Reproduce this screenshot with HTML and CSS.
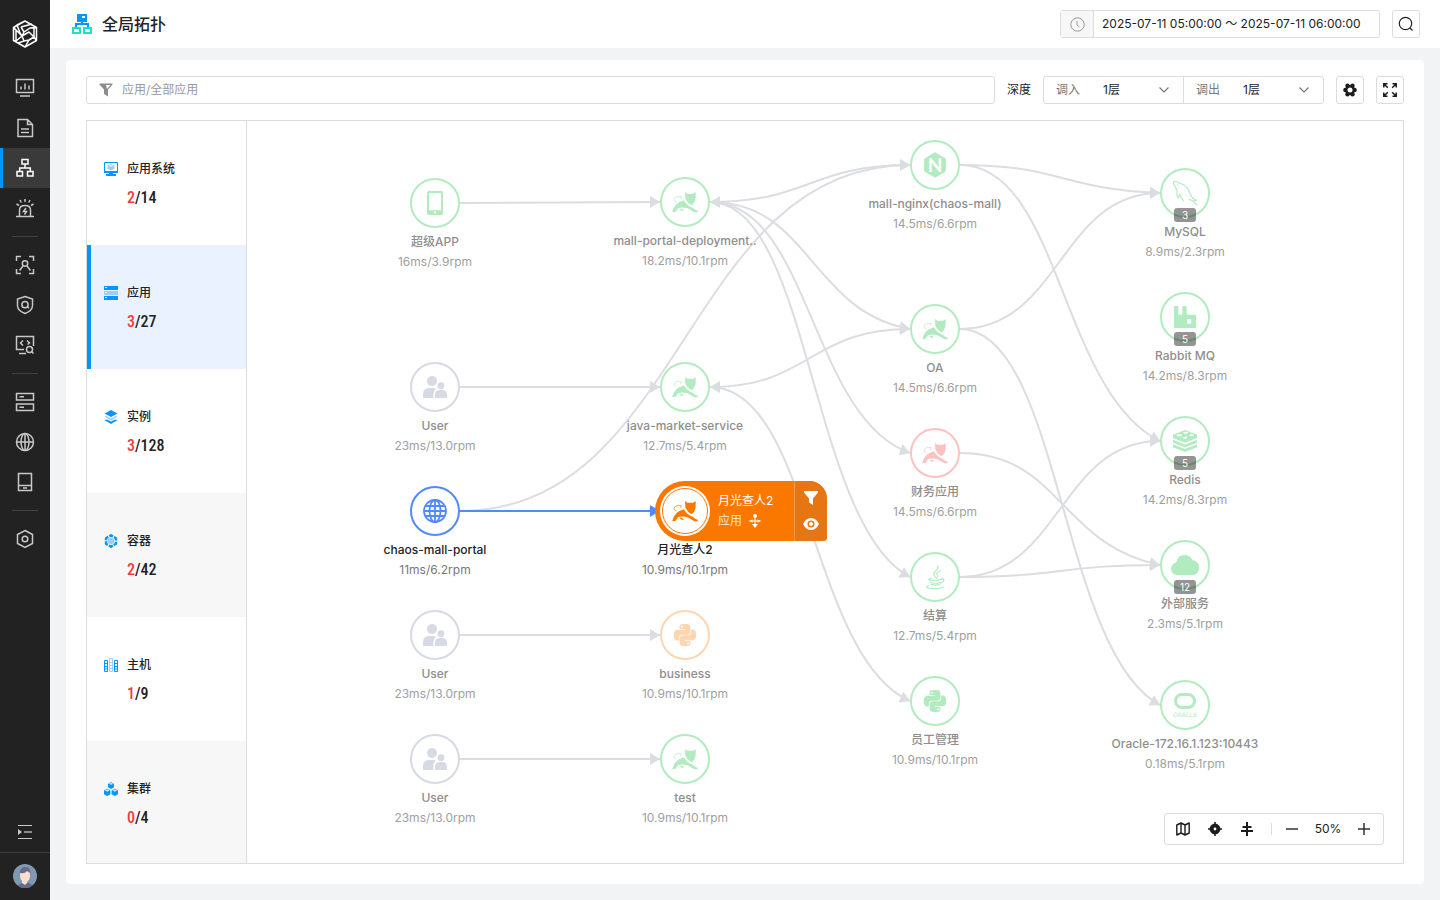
FILE: index.html
```html
<!DOCTYPE html>
<html lang="zh-CN">
<head>
<meta charset="utf-8">
<meta name="viewport" content="width=device-width, initial-scale=1">
<title>全局拓扑</title>
<link rel="stylesheet" href="styles.css">
</head>
<body>
<svg class="sprite" aria-hidden="true">
  <defs>
    <marker id="arrow" class="arrow" viewBox="0 0 10 12" refX="10" refY="6" markerWidth="10" markerHeight="12" markerUnits="userSpaceOnUse" orient="auto-start-reverse"><path d="M0 0 10 6 0 12Z"/></marker>
    <marker id="arrow-active" class="arrow-active" viewBox="0 0 10 12" refX="10" refY="6" markerWidth="10" markerHeight="12" markerUnits="userSpaceOnUse" orient="auto"><path d="M0 0 10 6 0 12Z"/></marker>
  </defs>
  <symbol id="tomcat" viewBox="-39 -39 78 78">
    <path fill="currentColor" d="M0-30 7-25H25L32-30V-13Q30 3 20 10 7 4 1-11ZM-38 29-36 24Q-32 10-18 1L-3-5Q4 9 16 14L24 18Q30 24 38 26V31H28L8 19Q-8 14-20 18L-29 30H-38ZM-17 20H-9L-3 27Q-12 28-17 20Z"/>
    <path fill="none" stroke="currentColor" stroke-width="2" d="M-25 0Q-38-5-29-14-20-19-11-16L-13-9"/>
  </symbol>
  <symbol id="users" viewBox="-39 -39 78 78">
    <g fill="currentColor"><circle cx="-9" cy="-18" r="15"/><circle cx="18" cy="-4" r="10"/><path d="M-36 33V22Q-36 3-17 3H-1L2 6Q-5 12-5 22V33ZM0 33V24Q0 9 15 9H21Q36 9 36 24V33Z"/></g>
  </symbol>
  <symbol id="phone" viewBox="-39 -39 78 78">
    <path fill="currentColor" fill-rule="evenodd" d="M-19-36H19Q24-36 24-31V31Q24 36 19 36H-19Q-24 36-24 31V-31Q-24-36-19-36ZM-18-30V22H18V-30ZM-3 26V31H3V26Z"/>
  </symbol>
  <symbol id="globe" viewBox="0 0 26 26">
    <g fill="none" stroke="currentColor" stroke-width="1.8"><circle cx="13" cy="13" r="11"/><ellipse cx="13" cy="13" rx="5.5" ry="11"/><path d="M13 2V24M2 13H24M3.5 8H22.5M3.5 18H22.5"/></g>
  </symbol>
  <symbol id="python" viewBox="-2 -2 28 28">
    <path fill="currentColor" d="M14.25.18l.9.2.73.26.59.3.45.32.34.34.25.34.16.33.1.3.04.26.02.2-.01.13V8.5l-.05.63-.13.55-.21.46-.26.38-.3.31-.33.25-.35.19-.35.14-.33.1-.3.07-.26.04-.21.02H8.77l-.69.05-.59.14-.5.22-.41.27-.33.32-.27.35-.2.36-.15.37-.1.35-.07.32-.04.27-.02.21v3.06H3.17l-.21-.03-.28-.07-.32-.12-.35-.18-.36-.26-.36-.36-.35-.46-.32-.59-.28-.73-.21-.88-.14-1.05-.05-1.23.06-1.22.16-1.04.24-.87.32-.71.36-.57.4-.44.42-.33.42-.24.4-.16.36-.1.32-.05.24-.01h.16l.06.01h8.16v-.83H6.18l-.01-2.75-.02-.37.05-.34.11-.31.17-.28.25-.26.31-.23.38-.2.44-.18.51-.15.58-.12.64-.1.71-.06.77-.04.84-.02 1.27.05zm-6.3 1.98l-.23.33-.08.41.08.41.23.34.33.22.41.09.41-.09.33-.22.23-.34.08-.41-.08-.41-.23-.33-.33-.22-.41-.09-.41.09zm13.09 3.95l.28.06.32.12.35.18.36.27.36.35.35.47.32.59.28.73.21.88.14 1.04.05 1.23-.06 1.23-.16 1.04-.24.86-.32.71-.36.57-.4.45-.42.33-.42.24-.4.16-.36.09-.32.05-.24.02-.16-.01h-8.22v.82h5.84l.01 2.76.02.36-.05.34-.11.31-.17.29-.25.25-.31.24-.38.2-.44.17-.51.15-.58.13-.64.09-.71.07-.77.04-.84.01-1.27-.04-1.07-.14-.9-.2-.73-.25-.59-.3-.45-.33-.34-.34-.25-.34-.16-.33-.1-.3-.04-.25-.02-.2.01-.13v-5.34l.05-.64.13-.54.21-.46.26-.38.3-.32.33-.24.35-.2.35-.14.33-.1.3-.06.26-.04.21-.02.13-.01h5.84l.69-.05.59-.14.5-.21.41-.28.33-.32.27-.35.2-.36.15-.36.1-.35.07-.32.04-.28.02-.21V6.07h2.09l.14.01zm-6.47 14.25l-.23.33-.08.41.08.41.23.33.33.23.41.08.41-.08.33-.23.23-.33.08-.41-.08-.41-.23-.33-.33-.23-.41-.08-.41.08z"/>
  </symbol>
  <symbol id="java" viewBox="-39 -39 78 78">
    <g fill="none" stroke="currentColor" stroke-width="3.4" stroke-linecap="round"><path d="M8-34Q12-25 2-18-9-9 1 1M17-19Q0-12 7-6 11-1 4 4M-12 4Q-26 8-12 10 6 12 20 7M20 5Q30 5 25 13 22 17 16 19M-15 16Q0 21 15 17M-12 22Q0 26 13 23M-20 26Q-34 32-8 35 16 35 25 30"/></g>
  </symbol>
  <symbol id="mysql" viewBox="-39 -39 78 78">
    <path fill="none" stroke="currentColor" stroke-width="3.4" stroke-linejoin="round" d="M-4 24-11 13-16 4-20 15Q-27 8-23-4L-29-18Q-38-29-33-34-27-37-19-30-2-28 10-10 17 5 23 16L34 22 24 24 37 37M23 24Q17 19 12 20M-24-24H-21"/>
  </symbol>
  <symbol id="rabbit" viewBox="-39 -39 78 78">
    <path fill="currentColor" fill-rule="evenodd" d="M-31-33H-22L-20-31V-9L-18-7H-10L-8-9V-31L-6-33H3L5-31V-9L7-7H31L33-5V31L31 33H-31L-33 31V-31ZM8 6 6 8V18L8 20H17L19 18V8L17 6Z"/>
  </symbol>
  <symbol id="redis" viewBox="-39 -39 78 78">
    <path fill="currentColor" d="M0-33 36-19V-9L0 5-36-9V-19ZM-36-4 0 11 36-4V5L0 19-36 5ZM-36 10 0 24 36 10V19L0 33-36 19Z"/>
    <g fill="#fff"><path d="M-3-28 3-26 10-28 8-23 0-22-5-24Z"/><ellipse cx="-17" cy="-17" rx="8" ry="3.5"/><path d="M-8-9 6-14 4-5ZM12-17 20-21 27-18 20-14Z"/></g>
  </symbol>
  <symbol id="cloud" viewBox="-45 -45 90 90">
    <path fill="currentColor" d="M-24 30Q-42 28-42 12-42-2-26-8-22-30-2-30 14-30 22-15 42-12 42 8 42 28 22 30Z"/>
  </symbol>
  <symbol id="funnel" viewBox="0 0 14 14"><path fill="currentColor" d="M0 0H14V1.5L9 7.5V14L5 11.5V7.5L0 1.5Z"/></symbol>
</svg>

<div class="app">
  <aside class="sidebar">
    <a class="logo" href="#" aria-label="首页">
      <svg width="26" height="28" viewBox="0 0 26 28" fill="none" stroke="#fff" stroke-width="1.5" stroke-linejoin="round"><path d="M13 1 24.5 7.5V20.5L13 27 1.5 20.5V7.5ZM13 1 5 5 8 13 10 16 4 10 1.5 7.5M5 5 1.5 7.5M9 7 20 4M9 7 12 12 18 8 24.500 7.500M12 12 10 16 17 12 22 17 24.500 20.500M22 17 17 20 13 27M10 16 4 21 1.500 20.500M10 16 12 21 17 20M12 21 6 23M4 10 4 21M22 8 22 17"/></svg>
    </a>
    <nav class="nav" aria-label="主导航">
      <a class="nav-item" href="#" aria-label="仪表盘"><svg width="20" height="20" viewBox="0 0 20 20"><path d="M1.5 1.5H18.5V14.5H1.5ZM5 18H15M6 8.500V11.500M10 5.500V11.500M14 7.500V11.500"/></svg></a>
      <a class="nav-item" href="#" aria-label="报告"><svg width="20" height="20" viewBox="0 0 20 20"><path d="M3 1.5H12.5L17.5 6.5V18.500H3ZM12.500 1.500V6.500H17.500M6 11H14M6 14.500H14"/></svg></a>
      <a class="nav-item active" href="#" aria-label="拓扑" aria-current="page"><svg width="20" height="20" viewBox="0 0 20 20"><path d="M7 1.500H13V6H7ZM2 13.500H7.500V18H2ZM12.500 13.500H18V18H12.500ZM10 6V10M4.700 13.500V10H15.300V13.500"/></svg></a>
      <a class="nav-item" href="#" aria-label="告警"><svg width="20" height="20" viewBox="0 0 20 20"><path d="M1 18.500H19M4.500 18V12Q4.500 7.500 10 7.500T15.500 12V18M10 1V4M5 2 6.300 4.500M15 2 13.700 4.500M1.500 6 4 7.500M18.500 6 16 7.500M11 10 8.500 13.500H11.500L9.500 16.500"/></svg></a>
      <hr class="nav-rule">
      <a class="nav-item" href="#" aria-label="用户体验"><svg width="20" height="20" viewBox="0 0 20 20"><path d="M1.500 6V1.500H6M14 1.500H18.500V6M18.500 14V18.500H14M6 18.500H1.500V14M4.500 15.500 8 11M15.500 15.500 12 11"/><circle cx="10" cy="8.500" r="2.700"/></svg></a>
      <a class="nav-item" href="#" aria-label="安全"><svg width="20" height="20" viewBox="0 0 20 20"><path d="M10 1.500 17.500 4V11Q17 16 10 18.500 3 16 2.500 11V4ZM12 11.500 14 13.200"/><circle cx="10" cy="9.700" r="3.100"/></svg></a>
      <a class="nav-item" href="#" aria-label="代码分析"><svg width="20" height="20" viewBox="0 0 20 20"><path d="M9 14.500H1.500V1.500H18.500V11M4 18.500H11M8 5.500 5.500 8 8 10.500M12 5.500 14.500 8 12.500 9.500M16.500 16.500 18.500 18.500"/><circle cx="14.500" cy="14.500" r="3"/></svg></a>
      <hr class="nav-rule">
      <a class="nav-item" href="#" aria-label="主机"><svg width="20" height="20" viewBox="0 0 20 20"><path d="M1.500 1.500H18.500V8H1.500ZM1.500 12H18.500V18.500H1.500ZM4.500 4.800H9M4.500 15.300H9"/></svg></a>
      <a class="nav-item" href="#" aria-label="网络"><svg width="20" height="20" viewBox="0 0 20 20"><circle cx="10" cy="10" r="8.500"/><ellipse cx="10" cy="10" rx="4" ry="8.500"/><path d="M10 1.500V18.500M1.500 10H18.500"/></svg></a>
      <a class="nav-item" href="#" aria-label="移动端"><svg width="20" height="20" viewBox="0 0 20 20"><path d="M3.500 1.500H16.500V18.500H3.500ZM3.500 13.500H16.500M8 16H12"/></svg></a>
      <hr class="nav-rule">
      <a class="nav-item" href="#" aria-label="设置"><svg width="20" height="20" viewBox="0 0 20 20"><path d="M10 1.500 17.500 5.500V14.500L10 18.500 2.500 14.500V5.500Z"/><circle cx="10" cy="10" r="2.800"/></svg></a>
    </nav>
    <button class="nav-toggle" type="button" aria-label="展开菜单"><svg width="14" height="14" viewBox="0 0 14 14"><path fill="none" stroke="#c8c8c8" d="M0 .5H14M0 13.500H14"/><path fill="none" stroke="#8c8c8c" stroke-width="2" d="M6 7H14"/><path fill="#c8c8c8" d="M0 4 4 7 0 10Z"/></svg></button>
    <div class="profile">
      <svg width="24" height="24" viewBox="0 0 24 24" role="img" aria-label="头像"><clipPath id="avatar"><circle cx="12" cy="12" r="12"/></clipPath><g clip-path="url(#avatar)"><path fill="#8099b1" d="M0 0H24V24H0Z"/><path fill="#666b8c" d="M4 24Q5 20 9 19H15Q20 20 20 24ZM7 11Q6 6 9 4 12 2 16 4 18 7 17 12Z"/><path fill="#fbdfce" d="M7 9Q12 10 14 7L17 9V13Q16 17 14 18V19L12 21 9 19V17Q7 15 7 12Z"/></g></svg>
    </div>
  </aside>

  <div class="page">
    <header class="header">
      <svg width="20" height="20" viewBox="0 0 20 20"><path fill="#0096ff" fill-rule="evenodd" d="M5 0H15V8H11V9H17V13H15V11H5V13H3V9H9V8H5ZM10 2H13V4H10Z"/><path fill="none" stroke="#1fe0c0" stroke-width="2" d="M1 14H8V19H1ZM12 14H19V19H12Z"/></svg>
      <h1 class="title">全局拓扑</h1>
      <div class="date-range">
        <span class="date-icon"><svg width="15" height="15" viewBox="0 0 15 15" fill="none" stroke="#999"><circle cx="7.500" cy="7.500" r="6.700"/><path d="M7 4V8L9.500 10"/></svg></span>
        <input class="date-input" type="text" aria-label="时间范围" value="2025-07-11 05:00:00 ～ 2025-07-11 06:00:00" readonly>
      </div>
      <button class="icon-btn" type="button" aria-label="搜索"><svg width="16" height="16" viewBox="0 0 16 16" fill="none" stroke="#222" stroke-width="1.200"><circle cx="7.500" cy="7.500" r="6.200"/><path d="M12 12 14.500 14.500"/></svg></button>
    </header>

    <main class="card">
      <div class="toolbar">
        <label class="filter">
          <svg width="14" height="14" viewBox="0 0 14 14"><path fill="#8c8c8c" fill-rule="evenodd" d="M.5.500H13.500V1.500L9 6.500V13.500L5 11V6.500L.5 1.500ZM7 2 8 6 11.500 2Z"/></svg>
          <input class="filter-input" type="text" placeholder="应用/全部应用" aria-label="应用筛选">
        </label>
        <span class="depth-label">深度</span>
        <div class="depth">
          <label class="depth-field"><span>调入</span><select class="depth-select"><option>1层</option><option>2层</option></select><svg class="chevron" width="10" height="6" viewBox="0 0 10 6"><path d="M.5.500 5 5 9.500.500"/></svg></label>
          <label class="depth-field"><span>调出</span><select class="depth-select"><option>1层</option><option>2层</option></select><svg class="chevron" width="10" height="6" viewBox="0 0 10 6"><path d="M.5.500 5 5 9.500.500"/></svg></label>
        </div>
        <button class="icon-btn" type="button" aria-label="设置"><svg width="14" height="14" viewBox="0 0 14 14" fill="#1c1c1c"><circle cx="7" cy="7" r="5"/><circle cx="2.400" cy="7" r="2.200"/><circle cx="11.600" cy="7" r="2.200"/><circle cx="4.500" cy="2.700" r="2.200"/><circle cx="9.500" cy="2.700" r="2.200"/><circle cx="4.500" cy="11.300" r="2.200"/><circle cx="9.500" cy="11.300" r="2.200"/><circle cx="7" cy="7" r="2.500" fill="#fff"/></svg></button>
        <button class="icon-btn" type="button" aria-label="全屏"><svg width="14" height="14" viewBox="0 0 14 14" fill="none" stroke="#1c1c1c" stroke-width="1.500"><path d="M.8 4.500V.8H4.500M9.500 .8H13.200V4.500M13.200 9.500V13.200H9.500M4.500 13.200H.8V9.500M1 1 4.800 4.800M13 1 9.200 4.800M13 13 9.200 9.200M1 13 4.800 9.200"/></svg></button>
      </div>

      <div class="board">
        <div class="levels">
          <button class="level" type="button">
            <svg width="14" height="14" viewBox="0 0 14 14"><path fill="none" stroke="#0096ff" d="M.5.500H13.500V10.500H.5Z"/><path fill="#0096ff" d="M0 9H14V11H9V12H12V14H2V12H5V11H0Z"/><path fill="#9fcbff" d="M7 2 10.500 3.500V7L7 8.500 3.500 7V3.500Z"/><path fill="#d8eaff" d="M7 2.500 9.500 3.500 7 5 4.500 3.500Z"/></svg>
            <span class="level-name">应用系统</span><span class="level-count"><em>2</em>/14</span>
          </button>
          <button class="level selected" type="button">
            <svg width="14" height="14" viewBox="0 0 14 14"><path fill="#0096ff" d="M0 0H14V4H0ZM0 10H14V14H0Z"/><path fill="#9fcbff" d="M0 5H14V9H0Z"/><path fill="#fff" d="M1 1H3V2H1ZM1 6H3V7H1ZM1 11H3V12H1Z"/></svg>
            <span class="level-name">应用</span><span class="level-count"><em>3</em>/27</span>
          </button>
          <button class="level" type="button">
            <svg width="14" height="14" viewBox="0 0 14 14"><path fill="#0096ff" d="M7 0 13.500 3.500 7 7 .5 3.500ZM.5 10 3 9.500 7 11.500 11 9.500 13.500 10 7 14Z"/><path fill="#9fcbff" d="M.5 6.500 2.500 6 7 8.500 11.500 6 13.500 6.500 7 10.500Z"/></svg>
            <span class="level-name">实例</span><span class="level-count"><em>3</em>/128</span>
          </button>
          <button class="level muted" type="button">
            <svg width="14" height="14" viewBox="0 0 14 14"><path fill="none" stroke="#0096ff" stroke-width="2.400" stroke-linejoin="round" stroke-dasharray="4.600 1.180" stroke-dashoffset="2.300" d="M7 1.300 12 4.200V9.800L7 12.700 2 9.800V4.200Z"/><path fill="#9fcbff" d="M7 3.500 10.200 5.200V8.800L7 10.500 3.800 8.800V5.200Z"/></svg>
            <span class="level-name">容器</span><span class="level-count"><em>2</em>/42</span>
          </button>
          <button class="level" type="button">
            <svg width="14" height="14" viewBox="0 0 14 14" fill="none"><path stroke="#0096ff" d="M.5 2.500H3.500V13.500H.5ZM.5 5.500H3.500M.5 8.500H3.500M.5 11H3.500M10.500 2.500H13.500V13.500H10.500ZM10.500 5.500H13.500M10.500 8.500H13.500M10.500 11H13.500"/><path stroke="#9fcbff" d="M5.500.500H8.500V13.500H5.500ZM5.500 4.500H8.500M5.500 7.500H8.500M5.500 10.500H8.500"/></svg>
            <span class="level-name">主机</span><span class="level-count"><em>1</em>/9</span>
          </button>
          <button class="level muted" type="button">
            <svg width="14" height="14" viewBox="0 0 14 14"><path fill="#0096ff" d="M7 0 10 1.800V5.200L7 7 4 5.200V1.800ZM3.200 6.800 6.400 8.500V12.200L3.200 14 0 12.200V8.500ZM10.800 6.800 14 8.500V12.200L10.800 14 7.600 12.200V8.500Z"/><path fill="#c4e2ff" d="M7 .5 9.500 1.800 7 2.800 4.500 1.800ZM3.200 7.300 5.600 8.600 3.200 9.700.8 8.600ZM10.800 7.300 13.200 8.600 10.800 9.700 8.400 8.600Z"/></svg>
            <span class="level-name">集群</span><span class="level-count"><em>0</em>/4</span>
          </button>
        </div>

        <div class="canvas">
          <svg class="edges" aria-hidden="true">
            <g class="edge">
              <path d="M213 82C313 82 313 81 413 81"/>
              <path d="M213 266H413"/>
              <path d="M213 514H413"/>
              <path d="M213 638H413"/>
              <path d="M213 390C438 390 438 44 663 44"/>
              <path class="both" d="M463 81C563 81 563 44 663 44"/>
              <path d="M463 81C563 81 563 190 663 208"/>
              <path d="M463 81C563 81 563 297 663 332"/>
              <path d="M463 81C563 81 563 404 663 456"/>
              <path class="both" d="M463 266C563 266 563 208 663 208"/>
              <path d="M463 266C563 266 563 536 663 580"/>
              <path d="M713 44C813 44 813 68 913 72"/>
              <path d="M713 44C813 44 813 271 913 320"/>
              <path d="M713 208C813 208 813 72 913 72"/>
              <path d="M713 208C813 208 813 531 913 584"/>
              <path d="M713 332C813 332 813 424 913 444"/>
              <path d="M713 456C813 456 813 320 913 320"/>
              <path d="M713 456C813 456 813 444 913 444"/>
            </g>
            <path class="edge-active" d="M213 390H413"/>
          </svg>

          <div class="node green n-app"><span class="ring"><svg><use href="#phone"/></svg></span><b>超级APP</b><small>16ms/3.9rpm</small></div>
          <div class="node gray n-user1"><span class="ring"><svg><use href="#users"/></svg></span><b>User</b><small>23ms/13.0rpm</small></div>
          <div class="node blue n-chaos"><span class="ring"><svg><use href="#globe"/></svg></span><b>chaos-mall-portal</b><small>11ms/6.2rpm</small></div>
          <div class="node gray n-user2"><span class="ring"><svg><use href="#users"/></svg></span><b>User</b><small>23ms/13.0rpm</small></div>
          <div class="node gray n-user3"><span class="ring"><svg><use href="#users"/></svg></span><b>User</b><small>23ms/13.0rpm</small></div>

          <div class="node green n-portal"><span class="ring"><svg><use href="#tomcat"/></svg></span><b>mall-portal-deployment..</b><small>18.2ms/10.1rpm</small></div>
          <div class="node green n-java"><span class="ring"><svg><use href="#tomcat"/></svg></span><b>java-market-service</b><small>12.7ms/5.4rpm</small></div>
          <div class="node focus n-moon"><span class="ring"></span><b>月光查人2</b><small>10.9ms/10.1rpm</small></div>
          <div class="node orange n-business"><span class="ring"><svg><use href="#python"/></svg></span><b>business</b><small>10.9ms/10.1rpm</small></div>
          <div class="node green n-test"><span class="ring"><svg><use href="#tomcat"/></svg></span><b>test</b><small>10.9ms/10.1rpm</small></div>

          <div class="node green n-nginx"><span class="ring"><svg viewBox="0 0 26 26"><path fill="currentColor" stroke="currentColor" stroke-linejoin="round" d="M13 .8 23.300 6.800V19.200L13 25.200 2.700 19.200V6.800Z"/><text class="nginx-letter" x="13" y="20" text-anchor="middle">N</text></svg></span><b>mall-nginx(chaos-mall)</b><small>14.5ms/6.6rpm</small></div>
          <div class="node green n-oa"><span class="ring"><svg><use href="#tomcat"/></svg></span><b>OA</b><small>14.5ms/6.6rpm</small></div>
          <div class="node red n-finance"><span class="ring"><svg><use href="#tomcat"/></svg></span><b>财务应用</b><small>14.5ms/6.6rpm</small></div>
          <div class="node green n-settle"><span class="ring"><svg><use href="#java"/></svg></span><b>结算</b><small>12.7ms/5.4rpm</small></div>
          <div class="node green n-staff"><span class="ring"><svg><use href="#python"/></svg></span><b>员工管理</b><small>10.9ms/10.1rpm</small></div>

          <div class="node green n-mysql"><span class="ring"><svg><use href="#mysql"/></svg><i class="badge">3</i></span><b>MySQL</b><small>8.9ms/2.3rpm</small></div>
          <div class="node green n-rabbit"><span class="ring"><svg><use href="#rabbit"/></svg><i class="badge">5</i></span><b>Rabbit MQ</b><small>14.2ms/8.3rpm</small></div>
          <div class="node green n-redis"><span class="ring"><svg><use href="#redis"/></svg><i class="badge">5</i></span><b>Redis</b><small>14.2ms/8.3rpm</small></div>
          <div class="node green n-cloud"><span class="ring"><svg class="wide"><use href="#cloud"/></svg><i class="badge">12</i></span><b>外部服务</b><small>2.3ms/5.1rpm</small></div>
          <div class="node green n-oracle"><span class="ring"><svg class="wide" viewBox="0 0 30 30"><rect x="5.500" y="4.500" width="19" height="13" rx="6.500" fill="none" stroke="currentColor" stroke-width="3"/><text class="oracle-word" x="15" y="27" text-anchor="middle" fill="currentColor">ORACLE</text></svg></span><b>Oracle-172.16.1.123:10443</b><small>0.18ms/5.1rpm</small></div>

          <div class="popover">
            <span class="disc"><span class="disc-ring"><svg width="26" height="26"><use href="#tomcat"/></svg></span></span>
            <div class="popover-text">
              <span>月光查人2</span>
              <span class="popover-type">应用 <svg width="14" height="14" viewBox="0 0 14 14"><circle cx="7" cy="2" r="2" fill="#fff"/><path fill="#fff" d="M6.500 3H7.500V10H10L7 14 4 10H6.500ZM.5 7 4.500 5.500V6.500H9.500V5.500L13.500 7 9.500 8.500V7.500H4.500V8.500Z"/></svg></span>
            </div>
            <div class="popover-actions">
              <button type="button" aria-label="筛选"><svg width="14" height="14"><use href="#funnel"/></svg></button>
              <button type="button" aria-label="查看"><svg width="16" height="12" viewBox="0 0 16 12"><path fill="#fff" fill-rule="evenodd" d="M0 6Q3 0 8 0T16 6Q13 12 8 12T0 6ZM8 2.500A3.500 3.500 0 1 0 8 9.500 3.500 3.500 0 1 0 8 2.500"/><circle cx="8" cy="6" r="2" fill="#fff"/></svg></button>
            </div>
          </div>

          <div class="zoombar">
            <button type="button" aria-label="缩略图"><svg width="14" height="14" viewBox="0 0 14 14" fill="none" stroke="#1c1c1c" stroke-width="1.400" stroke-linejoin="round"><path d="M.8 3 5 1 9 3 13.200 1V11L9 13 5 11 .8 13ZM5 1V11M9 3V13"/></svg></button>
            <button type="button" aria-label="定位"><svg width="14" height="14" viewBox="0 0 14 14"><path fill="none" stroke="#1c1c1c" stroke-width="1.500" d="M7 0V14M0 7H14"/><circle cx="7" cy="7" r="3.400" fill="#fff" stroke="#1c1c1c" stroke-width="4"/></svg></button>
            <button type="button" aria-label="对齐"><svg width="12" height="14" viewBox="0 0 12 14" fill="none" stroke="#1c1c1c" stroke-width="2"><path d="M6 0V14M1.500 5H10.500M0 9H12"/></svg></button>
            <span class="zoom-rule"></span>
            <button type="button" aria-label="缩小"><svg width="12" height="12" viewBox="0 0 12 12" stroke="#333" stroke-width="1.500"><path d="M0 6H12"/></svg></button>
            <output class="zoom-value">50%</output>
            <button type="button" aria-label="放大"><svg width="12" height="12" viewBox="0 0 12 12" stroke="#333" stroke-width="1.500"><path d="M0 6H12M6 0V12"/></svg></button>
          </div>
        </div>
      </div>
    </main>
  </div>
</div>
</body>
</html>
```
FILE: styles.css
```css
* { box-sizing: border-box; }

body {
  margin: 0;
  background: #f1f3f5;
  color: #222;
  font: 12px/20px Inter, "Noto Sans CJK SC", sans-serif;
}

button, input, select { font: inherit; color: inherit; }
button { padding: 0; border: 0; background: none; cursor: pointer; }
svg { display: block; flex: none; }
.sprite { position: absolute; width: 0; height: 0; }

.app { display: flex; min-height: 100vh; }

/* Sidebar */
.sidebar {
  display: flex;
  flex-direction: column;
  flex: none;
  width: 50px;
  background: #222;
}
.logo { display: flex; justify-content: center; padding: 20px 0; }
.nav { flex: 1; }
.nav-item {
  display: flex;
  align-items: center;
  justify-content: center;
  height: 40px;
  border: 0 solid transparent;
  border-width: 0 3px;
}
.nav-item svg { fill: none; stroke: #c8c8c8; stroke-width: 1.5; }
.nav-item.active { border-left-color: #0096ff; background: #3a3a3a; }
.nav-item.active svg { stroke: #fff; }
.nav-rule { height: 1px; margin: 8px 12px; border: 0; background: #404040; }
.nav-toggle { display: flex; justify-content: center; padding: 14px 0 13px; }
.profile { display: flex; justify-content: center; padding: 11px 0 12px; border-top: 1px solid #3c3c3c; }

/* Header */
.page { display: flex; flex: 1; flex-direction: column; min-width: 0; }
.header {
  display: flex;
  align-items: center;
  height: 48px;
  padding: 0 20px 0 22px;
  background: #fff;
}
.title { flex: 1; margin: 0 0 0 10px; font-size: 16px; line-height: 24px; font-weight: 500; }
.date-range {
  display: flex;
  width: 320px;
  height: 28px;
  margin-right: 12px;
  border: 1px solid #dcdcdc;
  border-radius: 3px;
}
.date-icon {
  display: flex;
  align-items: center;
  justify-content: center;
  width: 33px;
  border-right: 1px solid #dcdcdc;
  background: #f7f7f7;
}
.date-input { flex: 1; min-width: 0; padding: 0 8px; border: 0; background: none; outline: 0; }
.icon-btn {
  display: flex;
  align-items: center;
  justify-content: center;
  flex: none;
  width: 28px;
  height: 28px;
  border: 1px solid #dcdcdc;
  border-radius: 3px;
  background: #fff;
}

/* Card and toolbar */
.card {
  display: flex;
  flex: 1;
  flex-direction: column;
  gap: 16px;
  margin: 12px 16px 16px;
  padding: 16px 20px 20px;
  border-radius: 4px;
  background: #fff;
}
.toolbar { display: flex; align-items: center; gap: 12px; }
.filter {
  display: flex;
  align-items: center;
  flex: 1;
  gap: 9px;
  height: 28px;
  padding: 0 12px;
  border: 1px solid #dcdcdc;
  border-radius: 3px;
}
.filter-input { flex: 1; padding: 0; border: 0; outline: 0; background: none; }
.filter-input::placeholder { color: #999; opacity: 1; }
.depth { display: flex; width: 281px; height: 28px; border: 1px solid #dcdcdc; border-radius: 3px; }
.depth-field {
  position: relative;
  display: flex;
  align-items: center;
  flex: 1 1 0;
  min-width: 0;
  padding-left: 12px;
  color: #777;
}
.depth-field + .depth-field { border-left: 1px solid #dcdcdc; }
.depth-select {
  flex: 1;
  min-width: 0;
  height: 26px;
  padding: 0 0 0 23px;
  border: 0;
  outline: 0;
  background: none;
  color: #222;
  appearance: none;
}
.chevron { position: absolute; right: 14px; top: 10px; fill: none; stroke: #777; stroke-width: 1.2; pointer-events: none; }

/* Board */
.board { display: flex; flex: 1; border: 1px solid #dcdcdc; }
.levels { display: flex; flex-direction: column; width: 160px; flex: none; border-right: 1px solid #dcdcdc; }
.level {
  display: grid;
  flex: none;
  grid-template-columns: 14px 1fr;
  align-content: start;
  align-items: center;
  gap: 9px;
  height: 124px;
  padding: 38px 13px 0;
  border-left: 4px solid transparent;
  text-align: left;
}
.level:last-child { flex: 1; height: auto; }
.level.selected { border-left-color: #0096ff; background: #ebf2ff; }
.level.muted { background: #f7f7f7; }
.level-name { font-weight: 500; }
.level-count {
  grid-column: 2;
  font: 500 16px/20px "Roboto Condensed", "Liberation Sans Narrow", Roboto, sans-serif;
}
.level-count em { color: #f23c3c; font-style: normal; }

/* Topology canvas */
.canvas { position: relative; flex: 1; min-height: 742px; overflow: hidden; }
.edges { position: absolute; inset: 0; width: 100%; height: 100%; fill: none; }
.edge path { stroke: #dcdde2; stroke-width: 2; marker-end: url(#arrow); }
.edge .both { marker-start: url(#arrow); }
.edge-active { stroke: #5289ff; stroke-width: 2; marker-end: url(#arrow-active); }
.arrow { fill: #dcdde2; }
.arrow-active { fill: #5289ff; }

.node {
  position: absolute;
  display: flex;
  flex-direction: column;
  align-items: center;
  width: 160px;
  white-space: nowrap;
}
.node b { color: #8e8e8e; font-weight: 500; }
.node small { color: #a0a0a0; font-size: 12px; }
.ring {
  position: relative;
  display: flex;
  align-items: center;
  justify-content: center;
  width: 50px;
  height: 50px;
  margin-bottom: 4px;
  border: 2px solid currentColor;
  border-radius: 50%;
}
.ring svg { width: 26px; height: 26px; }
.ring .wide { width: 30px; height: 30px; }
.green .ring { color: #b2ebc0; }
.gray .ring { color: #d7dae4; }
.orange .ring { color: #fed6b0; }
.red .ring { color: #fcc1c1; }
.blue .ring { color: #5289ff; }
.focus .ring { visibility: hidden; }
.node.blue b, .node.focus b { color: #222; }
.node.blue small, .node.focus small { color: #777; }
.nginx-letter { fill: #fff; font: 700 19px Lato, sans-serif; }
.oracle-word { font: 400 6px "DejaVu Sans", sans-serif; }
.badge {
  position: absolute;
  left: 12px;
  bottom: -6px;
  width: 22px;
  height: 14px;
  border-radius: 3px;
  background: rgba(0, 0, 0, .42);
  color: #fff;
  font: 10px/14px Inter, sans-serif;
  text-align: center;
}

.n-app, .n-user1, .n-chaos, .n-user2, .n-user3 { left: 108px; }
.n-portal, .n-java, .n-moon, .n-business, .n-test { left: 358px; }
.n-nginx, .n-oa, .n-finance, .n-settle, .n-staff { left: 608px; }
.n-mysql, .n-rabbit, .n-redis, .n-cloud, .n-oracle { left: 858px; }
.n-app { top: 57px; }
.n-portal { top: 56px; }
.n-user1, .n-java { top: 241px; }
.n-chaos, .n-moon { top: 365px; }
.n-user2, .n-business { top: 489px; }
.n-user3, .n-test { top: 613px; }
.n-nginx { top: 19px; }
.n-oa { top: 183px; }
.n-finance { top: 307px; }
.n-settle { top: 431px; }
.n-staff { top: 555px; }
.n-mysql { top: 47px; }
.n-rabbit { top: 171px; }
.n-redis { top: 295px; }
.n-cloud { top: 419px; }
.n-oracle { top: 559px; }

/* Focused node popover */
.popover {
  position: absolute;
  left: 408px;
  top: 360px;
  display: flex;
  align-items: stretch;
  width: 172px;
  height: 60px;
  padding-left: 5px;
  border-radius: 30px 18px 4px 30px;
  background: #fa7800;
  color: #fff;
  overflow: hidden;
}
.disc { width: 50px; height: 50px; margin: 5px 8px 5px 0; padding: 2px; border-radius: 50%; background: #fff; }
.disc-ring {
  display: flex;
  align-items: center;
  justify-content: center;
  height: 46px;
  border: 1px solid #fa7800;
  border-radius: 50%;
  color: #fa7800;
}
.popover-text { display: flex; flex: 1; flex-direction: column; justify-content: center; white-space: nowrap; }
.popover-type { display: flex; align-items: center; gap: 6px; color: #ffe6cf; }
.popover-actions {
  display: flex;
  flex-direction: column;
  width: 33px;
  padding: 4px 0;
  border-left: 1px solid #f79a48;
  background: #e67614;
  color: #fff;
}
.popover-actions button { display: flex; flex: 1; align-items: center; justify-content: center; }

/* Zoom controls */
.zoombar {
  position: absolute;
  right: 19px;
  bottom: 18px;
  display: flex;
  align-items: center;
  height: 32px;
  padding: 0 3px 0 2px;
  border: 1px solid #dcdcdc;
  border-radius: 3px;
  background: #fff;
}
.zoombar button { display: flex; align-items: center; justify-content: center; width: 32px; height: 30px; }
.zoom-rule { width: 1px; height: 12px; margin: 0 4px 0 8px; background: #dcdcdc; }
.zoom-value { width: 40px; text-align: center; }
```
